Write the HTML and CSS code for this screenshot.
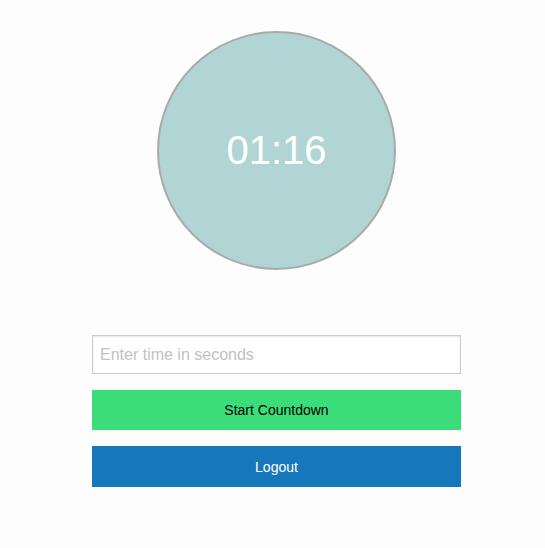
FILE: index.html
```html
<!DOCTYPE html>
<html>
<head>
    <title>Countdown</title>
    <link rel="stylesheet" href="styles.css">
</head>
<body>
    <div class="page">
        <div class="timer">
            <span class="timer-text">01:16</span>
        </div>
        <div class="controls">
            <input type="text" class="time-input" placeholder="Enter time in seconds">
            <button class="btn btn-start">Start Countdown</button>
            <button class="btn btn-logout">Logout</button>
        </div>
    </div>
</body>
</html>
```

FILE: styles.css
```css
body {
    margin: 0 0 0 8px;
    font-family: "Liberation Sans", Arial, sans-serif;
    background-color: #fdfdfd;
}

.page {
    display: flex;
    flex-direction: column;
    align-items: center;
    padding-top: 31px;
}

.timer {
    width: 235px;
    height: 235px;
    border: 2px solid #aaaaaa;
    border-radius: 50%;
    background-color: #b1d5d4;
    display: flex;
    align-items: center;
    justify-content: center;
}

.timer-text {
    color: #ffffff;
    font-size: 40px;
}

.controls {
    display: flex;
    flex-direction: column;
    gap: 16px;
    width: 369px;
    margin-top: 65px;
}

.time-input {
    box-sizing: border-box;
    height: 39px;
    padding: 0 7px;
    border: 1px solid #cccccc;
    box-shadow: inset 0 1px 2px #e6e6e6;
    font-family: inherit;
    font-size: 16px;
    background: #ffffff;
}

.time-input::placeholder {
    color: #c2c2c2;
}

.btn {
    height: 40px;
    border: none;
    font-family: inherit;
    font-size: 14px;
}

.btn-start {
    background-color: #3bdc7a;
    color: #000000;
}

.btn-logout {
    height: 41px;
    background-color: #1777bb;
    color: #ffffff;
}
```
